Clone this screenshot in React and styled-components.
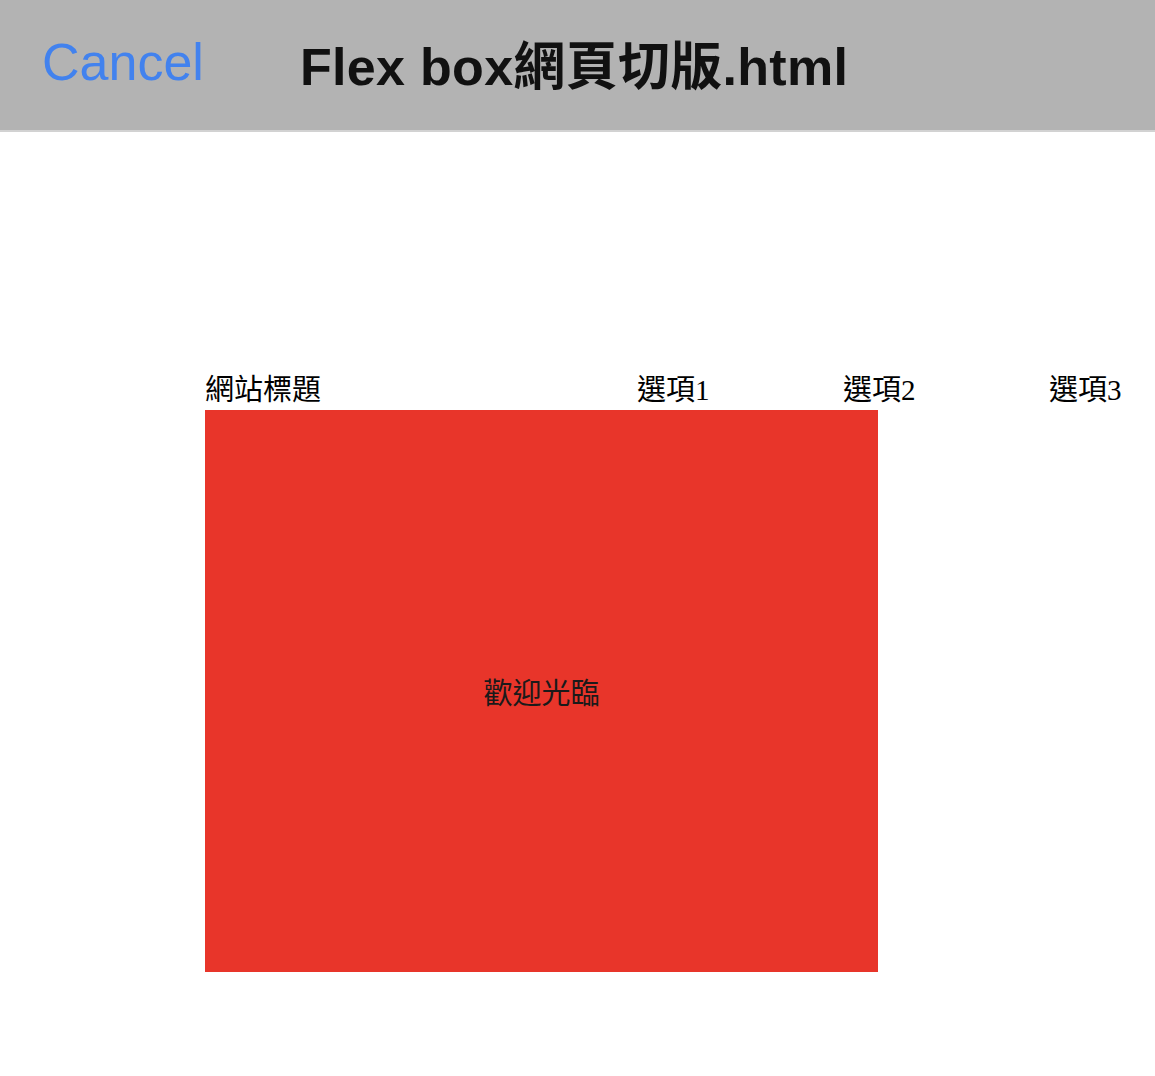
import React from "react";
import styled, { createGlobalStyle } from "styled-components";

const GlobalStyle = createGlobalStyle`
  html, body {
    margin: 0;
    padding: 0;
    background: #fff;
    overflow-x: hidden;
  }
`;

const navItems = ["選項1", "選項2", "選項3"];

export default function App() {
  return (
    <>
      <GlobalStyle />
      <TopBar>
        <CancelButton>Cancel</CancelButton>
        <Title>Flex box網頁切版.html</Title>
      </TopBar>
      <Page>
        <Nav>
          <Brand>網站標題</Brand>
          {navItems.map((item, i) => (
            <NavItem key={item} $last={i === navItems.length - 1}>
              {item}
            </NavItem>
          ))}
        </Nav>
        <Hero>歡迎光臨</Hero>
      </Page>
    </>
  );
}

const TopBar = styled.header`
  height: 132px;
  box-sizing: border-box;
  padding: 0 0 6px 42px;
  background: #b3b3b3;
  border-bottom: 2px solid #d2d2d2;
  display: flex;
  align-items: center;
  font-family: "Liberation Sans", "Noto Sans CJK TC", sans-serif;
  font-size: 52px;
`;

const CancelButton = styled.div`
  color: #4282ee;
  width: 258px;
  flex-shrink: 0;
`;

const Title = styled.div`
  color: #111;
  font-weight: bold;
  white-space: nowrap;
  letter-spacing: 0.3px;
`;

const Page = styled.main`
  padding: 240px 0 0 205px;
  font-family: "Liberation Serif", "Noto Sans CJK TC", serif;
  font-size: 29px;
`;

const Nav = styled.nav`
  display: flex;
  height: 38px;
  line-height: 36px;
  color: #000;
  white-space: nowrap;
`;

const Brand = styled.div`
  width: 432px;
  flex-shrink: 0;
`;

const NavItem = styled.div`
  width: ${(p) => (p.$last ? "auto" : "206px")};
  flex-shrink: 0;
`;

const Hero = styled.section`
  width: 673px;
  height: 562px;
  background: #e8352a;
  display: flex;
  align-items: center;
  justify-content: center;
  color: #1a1a1a;
  font-family: "Noto Sans CJK TC", sans-serif;
`;
